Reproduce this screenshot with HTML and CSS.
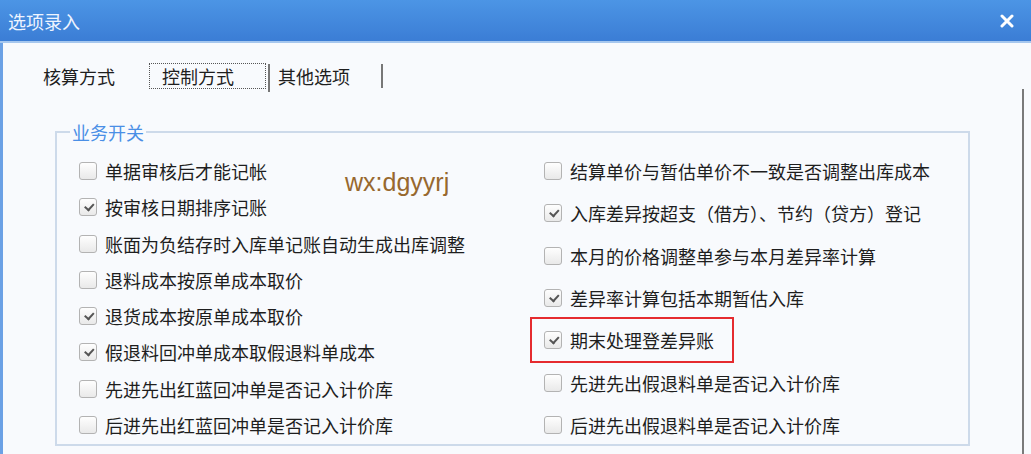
FILE: index.html
```html
<!DOCTYPE html>
<html lang="zh-CN">
<head>
    <meta charset="UTF-8">
    <title>选项录入</title>
    <link rel="stylesheet" href="styles.css">
</head>
<body>
    <div class="window">
        <div class="titlebar">
            <span class="title">选项录入</span>
            <svg class="close" width="14" height="14" viewBox="0 0 14 14">
                <path d="M2 2 L12 12 M12 2 L2 12" stroke="#fff" stroke-width="3" stroke-linecap="round"/>
            </svg>
        </div>
        <div class="content">
            <div class="main">
                <div class="tabs">
                    <span class="tab">核算方式</span>
                    <span class="tab tab-active">控制方式</span>
                    <span class="tab-line tall"></span>
                    <span class="tab tab-other">其他选项</span>
                    <span class="tab-line"></span>
                </div>

                <fieldset class="group">
                    <legend>业务开关</legend>
                    <div class="columns">
                        <div class="watermark">wx:dgyyrj</div>
                        <div class="col col-left">
                            <label class="opt"><span class="box"></span>单据审核后才能记帐</label>
                            <label class="opt"><span class="box checked"></span>按审核日期排序记账</label>
                            <label class="opt"><span class="box"></span>账面为负结存时入库单记账自动生成出库调整</label>
                            <label class="opt"><span class="box"></span>退料成本按原单成本取价</label>
                            <label class="opt"><span class="box checked"></span>退货成本按原单成本取价</label>
                            <label class="opt"><span class="box checked"></span>假退料回冲单成本取假退料单成本</label>
                            <label class="opt"><span class="box"></span>先进先出红蓝回冲单是否记入计价库</label>
                            <label class="opt"><span class="box"></span>后进先出红蓝回冲单是否记入计价库</label>
                        </div>
                        <div class="col col-right">
                            <label class="opt"><span class="box"></span>结算单价与暂估单价不一致是否调整出库成本</label>
                            <label class="opt"><span class="box checked"></span>入库差异按超支（借方）、节约（贷方）登记</label>
                            <label class="opt"><span class="box"></span>本月的价格调整单参与本月差异率计算</label>
                            <label class="opt"><span class="box checked"></span>差异率计算包括本期暂估入库</label>
                            <label class="opt marked"><span class="box checked"></span>期末处理登差异账</label>
                            <label class="opt"><span class="box"></span>先进先出假退料单是否记入计价库</label>
                            <label class="opt"><span class="box"></span>后进先出假退料单是否记入计价库</label>
                        </div>
                    </div>
                </fieldset>
            </div>
            <div class="edge"></div>
        </div>
    </div>
</body>
</html>
```

FILE: styles.css
```css
body {
    margin: 0;
    font-family: "Noto Sans CJK SC", "Noto Sans", sans-serif;
    font-size: 18px;
    color: #1e1e1e;
    background: #f8fafd;
}

.window {
    width: 1031px;
    height: 454px;
    display: flex;
    flex-direction: column;
    overflow: hidden;
}

.titlebar {
    height: 41px;
    flex-shrink: 0;
    display: flex;
    align-items: center;
    justify-content: space-between;
    padding: 0 17px 0 8px;
    background: linear-gradient(#4c95e5, #3b7dd5);
    border-bottom: 2px solid #a6c7ee;
}

.title {
    color: #eef4ff;
    font-size: 18px;
    line-height: 24px;
}

.close {
    display: block;
}

.content {
    flex: 1;
    display: flex;
    border-left: 3px solid #6ba1e5;
    background: #f8fafd;
}

.main {
    flex: 1;
    padding-top: 18px;
}

.edge {
    width: 2px;
    margin: 46px 7px 0 0;
    background: #7a7a7a;
}

/* tabs */
.tabs {
    display: flex;
    align-items: center;
    height: 30px;
}

.tab {
    line-height: 24px;
    white-space: nowrap;
}

.tabs .tab:first-child {
    margin-left: 40px;
}

.tab-active {
    margin-left: 34px;
    padding: 0 31px 0 12px;
    border: 1px dotted #555;
}

.tab-line {
    width: 2px;
    height: 24px;
    margin-left: 31px;
    background: #777;
}

.tab-line.tall {
    height: 28px;
    margin-left: 2px;
    margin-top: 3px;
}

.tab-other {
    margin-left: 8px;
}

/* group box */
.group {
    margin: 29px 0 0 52px;
    width: 915px;
    box-sizing: border-box;
    padding: 0 0 7px 0;
    border: 2px solid #cddaea;
    min-width: 0;
}

.group legend {
    margin-left: 13px;
    padding: 0 2px;
    color: #4a8fe6;
    line-height: 24px;
}

.columns {
    position: relative;
    display: flex;
    padding: 15px 0 0 22px;
}

.col {
    height: 278px;
    display: flex;
    flex-direction: column;
    justify-content: space-between;
    align-items: flex-start;
}

.col-left {
    width: 465px;
}

.opt {
    position: relative;
    display: flex;
    align-items: center;
    height: 24px;
    line-height: 24px;
    white-space: nowrap;
}

.box {
    width: 16px;
    height: 16px;
    margin-right: 8px;
    border: 1px solid #b3b3b3;
    border-radius: 3px;
    background: linear-gradient(#fefefe, #e9e9e9);
    position: relative;
}

.box.checked::after {
    content: "";
    position: absolute;
    left: 4px;
    top: 2px;
    width: 7px;
    height: 4px;
    border-left: 2px solid #555;
    border-bottom: 2px solid #555;
    transform: rotate(-48deg) translate(-1px, 2px);
}

.marked::after {
    content: "";
    position: absolute;
    left: -14px;
    right: -20px;
    top: -11px;
    bottom: -11px;
    border: 2px solid #e52b2f;
}

.watermark {
    position: absolute;
    left: 288px;
    top: 23px;
    font-family: "Liberation Sans", Arial, sans-serif;
    font-size: 25px;
    line-height: 30px;
    color: #97682e;
}
```
